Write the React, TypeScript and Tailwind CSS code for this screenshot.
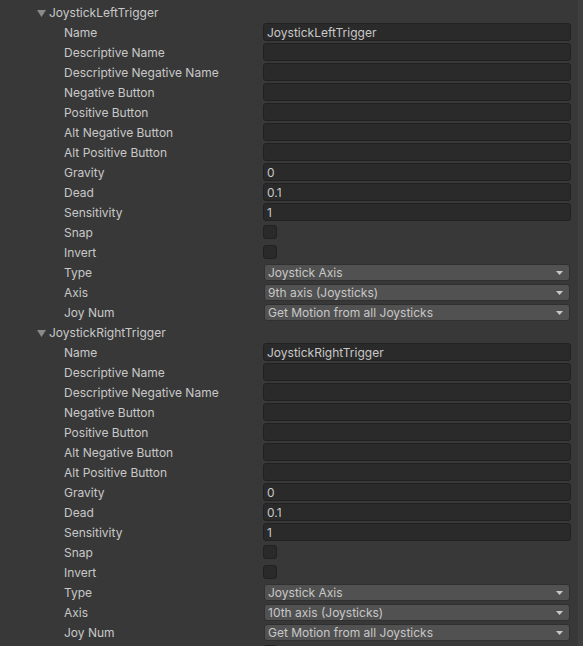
import React from "react";

type Field =
  | { label: string; kind: "text"; value?: string }
  | { label: string; kind: "check" }
  | { label: string; kind: "select"; value: string };

function axisFields(name: string, axis: string): Field[] {
  return [
    { label: "Name", kind: "text", value: name },
    { label: "Descriptive Name", kind: "text" },
    { label: "Descriptive Negative Name", kind: "text" },
    { label: "Negative Button", kind: "text" },
    { label: "Positive Button", kind: "text" },
    { label: "Alt Negative Button", kind: "text" },
    { label: "Alt Positive Button", kind: "text" },
    { label: "Gravity", kind: "text", value: "0" },
    { label: "Dead", kind: "text", value: "0.1" },
    { label: "Sensitivity", kind: "text", value: "1" },
    { label: "Snap", kind: "check" },
    { label: "Invert", kind: "check" },
    { label: "Type", kind: "select", value: "Joystick Axis" },
    { label: "Axis", kind: "select", value: axis },
    { label: "Joy Num", kind: "select", value: "Get Motion from all Joysticks" },
  ];
}

const AXES = [
  { name: "JoystickLeftTrigger", axis: "9th axis (Joysticks)" },
  { name: "JoystickRightTrigger", axis: "10th axis (Joysticks)" },
];

function FieldControl({ f }: { f: Field }) {
  if (f.kind === "text") {
    return (
      <div className="h-[18px] w-[308px] rounded-[3px] border border-[#212121] bg-[#2a2a2a] px-[3px] leading-[17px] text-[#c8c8c8]">
        {f.value}
      </div>
    );
  }
  if (f.kind === "check") {
    return <div className="mt-[2px] h-[14px] w-[14px] rounded-[3px] border border-[#212121] bg-[#2a2a2a]" />;
  }
  return (
    <div className="mt-[1px] ml-[1px] flex h-[17px] w-[306px] items-center justify-between rounded-[3px] border border-[#303030] bg-[#515151] pl-[3px] pr-[6px] text-[#c8c8c8]">
      <span className="leading-[14px]">{f.value}</span>
      <svg width="7" height="4" viewBox="0 0 7 4">
        <path d="M0 0 L7 0 L3.5 4 Z" fill="#c8c8c8" />
      </svg>
    </div>
  );
}

export default function App() {
  return (
    <div
      className="flex h-[646px] w-full overflow-hidden bg-[#383838] text-[12px]"
      style={{ fontFamily: "Inter, 'Noto Sans', sans-serif" }}
    >
      <div className="flex flex-1 flex-col pt-[3px]">
        {AXES.map((a) => (
          <div key={a.name} className="flex flex-col">
            <div className="flex h-[20px] items-center pl-[37px] text-[#c8c8c8]">
              <svg width="9" height="7" viewBox="0 0 9 7" className="mr-[3px]">
                <path d="M0 0 L9 0 L4.5 7 Z" fill="#8a8a8a" />
              </svg>
              <span>{a.name}</span>
            </div>
            {axisFields(a.name, a.axis).map((f) => (
              <div key={f.label} className="flex h-[20px]">
                <div className="flex h-[20px] w-[263px] items-center pl-[64px] text-[#c8c8c8]">
                  {f.label}
                </div>
                <FieldControl f={f} />
              </div>
            ))}
          </div>
        ))}
        <div className="flex h-[20px]">
          <div className="w-[263px]" />
          <FieldControl f={{ label: "Snap", kind: "check" }} />
        </div>
      </div>
      <div className="w-[5px] shrink-0 bg-[#3f3f3f]" />
    </div>
  );
}
